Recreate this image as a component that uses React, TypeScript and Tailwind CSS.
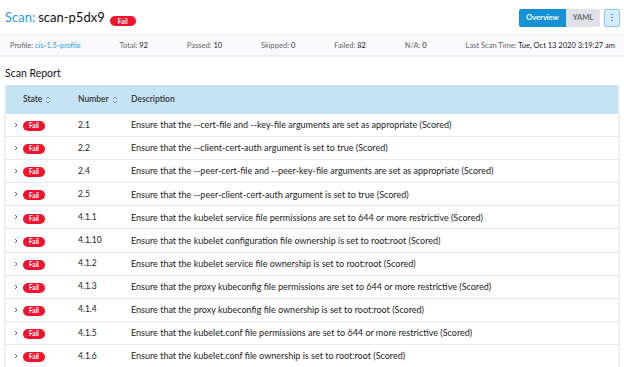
import React from "react";

type Row = { num: string; desc: string };

const rows: Row[] = [
  { num: "2.1", desc: "Ensure that the --cert-file and --key-file arguments are set as appropriate (Scored)" },
  { num: "2.2", desc: "Ensure that the --client-cert-auth argument is set to true (Scored)" },
  { num: "2.4", desc: "Ensure that the --peer-cert-file and --peer-key-file arguments are set as appropriate (Scored)" },
  { num: "2.5", desc: "Ensure that the --peer-client-cert-auth argument is set to true (Scored)" },
  { num: "4.1.1", desc: "Ensure that the kubelet service file permissions are set to 644 or more restrictive (Scored)" },
  { num: "4.1.10", desc: "Ensure that the kubelet configuration file ownership is set to root:root (Scored)" },
  { num: "4.1.2", desc: "Ensure that the kubelet service file ownership is set to root:root (Scored)" },
  { num: "4.1.3", desc: "Ensure that the proxy kubeconfig file permissions are set to 644 or more restrictive (Scored)" },
  { num: "4.1.4", desc: "Ensure that the proxy kubeconfig file ownership is set to root:root (Scored)" },
  { num: "4.1.5", desc: "Ensure that the kubelet.conf file permissions are set to 644 or more restrictive (Scored)" },
  { num: "4.1.6", desc: "Ensure that the kubelet.conf file ownership is set to root:root (Scored)" },
];

function FailBadge() {
  return (
    <span className="inline-flex h-[10px] w-[22px] items-center justify-center rounded-full bg-[#f0132d] text-[6.5px] font-bold text-white">
      Fail
    </span>
  );
}

function SortIcon() {
  return (
    <svg width="6" height="8" viewBox="0 0 6 8" className="ml-[3px] inline-block">
      <path d="M1 3 L3 1 L5 3" fill="none" stroke="#8a8a95" strokeWidth="0.9" />
      <path d="M1 5 L3 7 L5 5" fill="none" stroke="#8a8a95" strokeWidth="0.9" />
    </svg>
  );
}

function Caret() {
  return (
    <svg width="4" height="6" viewBox="0 0 4 6">
      <path d="M1 1 L3 3 L1 5" fill="none" stroke="#555" strokeWidth="0.9" />
    </svg>
  );
}

export default function App() {
  return (
    <div
      className="h-[367px] w-[624px] overflow-hidden bg-white text-[#222]"
      style={{ fontFamily: "Lato, 'Open Sans', sans-serif" }}
    >
      <div className="flex h-[36px] items-center justify-between border-b border-[#ececf2] pl-[5px] pr-[4px]">
        <div className="flex items-center">
          <span className="text-[13px] text-[#2a9ad8]">Scan:</span>
          <span className="ml-[3px] text-[13px] text-[#111]">scan-p5dx9</span>
          <span className="ml-[5px]">
            <span className="inline-flex h-[10px] w-[26px] items-center justify-center rounded-full bg-[#f0132d] text-[6.5px] font-bold text-white">
              Fail
            </span>
          </span>
        </div>
        <div className="flex items-center">
          <div className="flex h-[18px] w-[47px] items-center justify-center rounded-l-[2px] bg-[#1592d6] text-[7.5px] font-bold text-white">
            Overview
          </div>
          <div className="flex h-[18px] w-[34px] items-center justify-center rounded-r-[2px] bg-[#e1e1e9] text-[7.5px] font-bold text-[#6a6a75]">
            YAML
          </div>
          <div className="ml-[4px] flex h-[18px] w-[16px] flex-col items-center justify-center gap-[1.5px] rounded-[2px] border border-[#86c6ee] bg-[#d5ecfa]">
            <span className="h-[1.5px] w-[1.5px] rounded-full bg-[#2a8fd0]" />
            <span className="h-[1.5px] w-[1.5px] rounded-full bg-[#2a8fd0]" />
            <span className="h-[1.5px] w-[1.5px] rounded-full bg-[#2a8fd0]" />
          </div>
        </div>
      </div>

      <div className="flex h-[21px] items-center justify-between border-b-[2px] border-[#ededf2] bg-[#fafafc] pl-[10px] pr-[9px] text-[7.5px] text-[#666]">
        <span>
          Profile: <span className="text-[#2a9ad8]">cis-1.5-profile</span>
        </span>
        <span>
          Total: <span className="text-[#222]">92</span>
        </span>
        <span>
          Passed: <span className="text-[#222]">10</span>
        </span>
        <span>
          Skipped: <span className="text-[#222]">0</span>
        </span>
        <span>
          Failed: <span className="text-[#222]">82</span>
        </span>
        <span>
          N/A: <span className="text-[#222]">0</span>
        </span>
        <span>
          Last Scan Time: <span className="text-[#222]">Tue, Oct 13 2020 3:19:27 am</span>
        </span>
      </div>

      <div className="flex h-[28px] items-end pb-[3px] pl-[5px] text-[10.5px] text-[#111]">
        Scan Report
      </div>

      <div className="mx-[4px] border-x-[2px] border-[#f0f0f4]">
        <div className="flex h-[29px] items-center bg-[#c5e3f5] text-[8.5px] font-semibold text-[#333]">
          <div className="w-[17px]" />
          <div className="flex w-[55px] items-center">
            State
            <SortIcon />
          </div>
          <div className="flex w-[53px] items-center">
            Number
            <SortIcon />
          </div>
          <div>Description</div>
        </div>
        {rows.map((r) => (
          <div
            key={r.num}
            className="flex h-[23.1px] items-center border-b border-[#e8e8ee] text-[9px] text-[#222]"
          >
            <div className="flex w-[17px] justify-center pl-[3px]">
              <Caret />
            </div>
            <div className="w-[55px]">
              <FailBadge />
            </div>
            <div className="w-[53px] text-[8.5px]">{r.num}</div>
            <div>{r.desc}</div>
          </div>
        ))}
      </div>
    </div>
  );
}
